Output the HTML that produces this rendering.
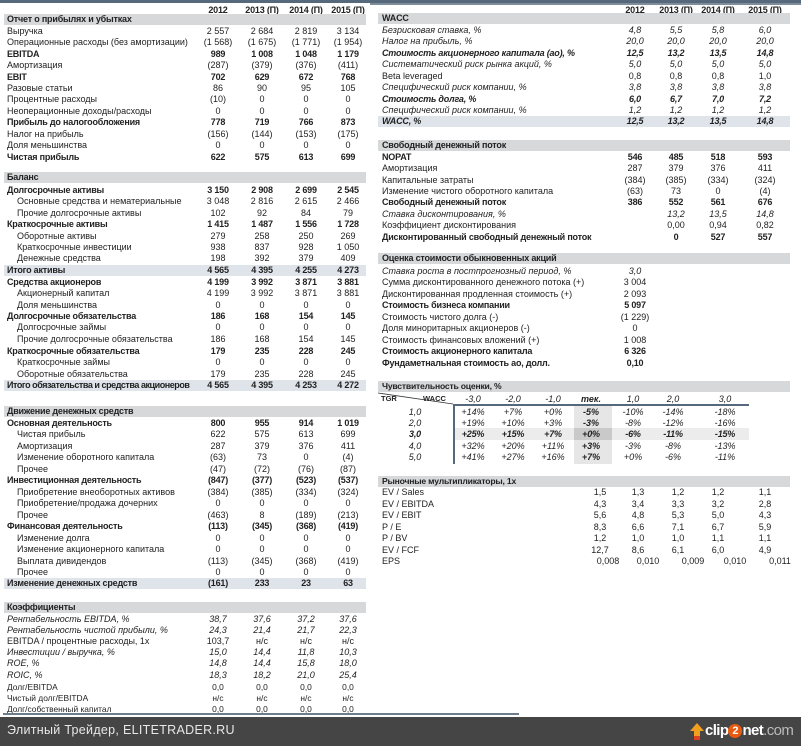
<!DOCTYPE html>
<html><head><meta charset="utf-8"><style>
body{margin:0;width:801px;height:746px;background:#fff;position:relative;overflow:hidden;font-family:"Liberation Sans","DejaVu Sans",sans-serif;color:#222}
.r{position:absolute;left:0;width:801px;height:12px;line-height:12px;font-size:9px;white-space:nowrap}
.r span{position:absolute;top:0}
.l{left:7px}.i{left:17px}.L{left:382px}
.a{left:198px;width:40px;text-align:center}.b{left:242px;width:40px;text-align:center}.c{left:286px;width:40px;text-align:center}.d{left:328px;width:40px;text-align:center}
.p{left:615px;width:40px;text-align:center}.q{left:656px;width:40px;text-align:center}.s{left:698px;width:40px;text-align:center}.t{left:745px;width:40px;text-align:center}
.B{font-weight:bold;letter-spacing:-0.2px}.I{font-style:italic}
.bar{position:absolute;height:11px;background:#d6d8d9}
.sh{position:absolute;height:11px;background:#dfe3ea}
.ln{position:absolute;background:#56697c}
</style></head><body>
<div class="ln" style="left:0;top:0;width:801px;height:3px"></div>
<div class="ln" style="left:370px;top:3px;width:431px;height:2px;background:#7d8d9c"></div>

<!-- left headers -->
<div class="r B" style="top:4px;text-decoration:underline"><span class="a">2012</span><span class="b">2013 (П)</span><span class="c">2014 (П)</span><span class="d">2015 (П)</span></div>
<div class="bar" style="left:4px;top:14px;width:362px"></div>
<div class="r B" style="top:13px"><span class="l">Отчет о прибылях и убытках</span></div>
<div class="r" style="top:25px"><span class="l">Выручка</span><span class="a">2 557</span><span class="b">2 684</span><span class="c">2 819</span><span class="d">3 134</span></div>
<div class="r" style="top:36px"><span class="l">Операционные расходы (без амортизации)</span><span class="a">(1 568)</span><span class="b">(1 675)</span><span class="c">(1 771)</span><span class="d">(1 954)</span></div>
<div class="r B" style="top:48px"><span class="l">EBITDA</span><span class="a">989</span><span class="b">1 008</span><span class="c">1 048</span><span class="d">1 179</span></div>
<div class="r" style="top:59px"><span class="l">Амортизация</span><span class="a">(287)</span><span class="b">(379)</span><span class="c">(376)</span><span class="d">(411)</span></div>
<div class="r B" style="top:71px"><span class="l">EBIT</span><span class="a">702</span><span class="b">629</span><span class="c">672</span><span class="d">768</span></div>
<div class="r" style="top:82px"><span class="l">Разовые статьи</span><span class="a">86</span><span class="b">90</span><span class="c">95</span><span class="d">105</span></div>
<div class="r" style="top:93px"><span class="l">Процентные расходы</span><span class="a">(10)</span><span class="b">0</span><span class="c">0</span><span class="d">0</span></div>
<div class="r" style="top:105px"><span class="l">Неоперационные доходы/расходы</span><span class="a">0</span><span class="b">0</span><span class="c">0</span><span class="d">0</span></div>
<div class="r B" style="top:116px"><span class="l">Прибыль до налогообложения</span><span class="a">778</span><span class="b">719</span><span class="c">766</span><span class="d">873</span></div>
<div class="r" style="top:128px"><span class="l">Налог на прибыль</span><span class="a">(156)</span><span class="b">(144)</span><span class="c">(153)</span><span class="d">(175)</span></div>
<div class="r" style="top:139px"><span class="l">Доля меньшинства</span><span class="a">0</span><span class="b">0</span><span class="c">0</span><span class="d">0</span></div>
<div class="r B" style="top:151px"><span class="l">Чистая прибыль</span><span class="a">622</span><span class="b">575</span><span class="c">613</span><span class="d">699</span></div>

<div class="bar" style="left:4px;top:172px;width:362px"></div>
<div class="r B" style="top:171px"><span class="l">Баланс</span></div>
<div class="r B" style="top:184px"><span class="l">Долгосрочные активы</span><span class="a">3 150</span><span class="b">2 908</span><span class="c">2 699</span><span class="d">2 545</span></div>
<div class="r" style="top:195px"><span class="i">Основные средства и нематериальные</span><span class="a">3 048</span><span class="b">2 816</span><span class="c">2 615</span><span class="d">2 466</span></div>
<div class="r" style="top:207px"><span class="i">Прочие долгосрочные активы</span><span class="a">102</span><span class="b">92</span><span class="c">84</span><span class="d">79</span></div>
<div class="r B" style="top:218px"><span class="l">Краткосрочные активы</span><span class="a">1 415</span><span class="b">1 487</span><span class="c">1 556</span><span class="d">1 728</span></div>
<div class="r" style="top:230px"><span class="i">Оборотные активы</span><span class="a">279</span><span class="b">258</span><span class="c">250</span><span class="d">269</span></div>
<div class="r" style="top:241px"><span class="i">Краткосрочные инвестиции</span><span class="a">938</span><span class="b">837</span><span class="c">928</span><span class="d">1 050</span></div>
<div class="r" style="top:252px"><span class="i">Денежные средства</span><span class="a">198</span><span class="b">392</span><span class="c">379</span><span class="d">409</span></div>
<div class="sh" style="left:4px;top:265px;width:362px"></div>
<div class="r B" style="top:264px"><span class="l">Итого активы</span><span class="a">4 565</span><span class="b">4 395</span><span class="c">4 255</span><span class="d">4 273</span></div>
<div class="r B" style="top:276px"><span class="l">Средства акционеров</span><span class="a">4 199</span><span class="b">3 992</span><span class="c">3 871</span><span class="d">3 881</span></div>
<div class="r" style="top:287px"><span class="i">Акционерный капитал</span><span class="a">4 199</span><span class="b">3 992</span><span class="c">3 871</span><span class="d">3 881</span></div>
<div class="r" style="top:299px"><span class="i">Доля меньшинства</span><span class="a">0</span><span class="b">0</span><span class="c">0</span><span class="d">0</span></div>
<div class="r B" style="top:310px"><span class="l">Долгосрочные обязательства</span><span class="a">186</span><span class="b">168</span><span class="c">154</span><span class="d">145</span></div>
<div class="r" style="top:321px"><span class="i">Долгосрочные займы</span><span class="a">0</span><span class="b">0</span><span class="c">0</span><span class="d">0</span></div>
<div class="r" style="top:333px"><span class="i">Прочие долгосрочные обязательства</span><span class="a">186</span><span class="b">168</span><span class="c">154</span><span class="d">145</span></div>
<div class="r B" style="top:345px"><span class="l">Краткосрочные обязательства</span><span class="a">179</span><span class="b">235</span><span class="c">228</span><span class="d">245</span></div>
<div class="r" style="top:356px"><span class="i">Краткосрочные займы</span><span class="a">0</span><span class="b">0</span><span class="c">0</span><span class="d">0</span></div>
<div class="r" style="top:368px"><span class="i">Оборотные обязательства</span><span class="a">179</span><span class="b">235</span><span class="c">228</span><span class="d">245</span></div>
<div class="sh" style="left:4px;top:380px;width:362px"></div>
<div class="r B" style="top:379px"><span class="l" style="letter-spacing:-0.45px">Итого обязательства и средства акционеров</span><span class="a">4 565</span><span class="b">4 395</span><span class="c">4 253</span><span class="d">4 272</span></div>

<div class="bar" style="left:4px;top:406px;width:362px"></div>
<div class="r B" style="top:405px"><span class="l">Движение денежных средств</span></div>
<div class="r B" style="top:417px"><span class="l">Основная деятельность</span><span class="a">800</span><span class="b">955</span><span class="c">914</span><span class="d">1 019</span></div>
<div class="r" style="top:428px"><span class="i">Чистая прибыль</span><span class="a">622</span><span class="b">575</span><span class="c">613</span><span class="d">699</span></div>
<div class="r" style="top:440px"><span class="i">Амортизация</span><span class="a">287</span><span class="b">379</span><span class="c">376</span><span class="d">411</span></div>
<div class="r" style="top:451px"><span class="i">Изменение оборотного капитала</span><span class="a">(63)</span><span class="b">73</span><span class="c">0</span><span class="d">(4)</span></div>
<div class="r" style="top:463px"><span class="i">Прочее</span><span class="a">(47)</span><span class="b">(72)</span><span class="c">(76)</span><span class="d">(87)</span></div>
<div class="r B" style="top:474px"><span class="l">Инвестиционная деятельность</span><span class="a">(847)</span><span class="b">(377)</span><span class="c">(523)</span><span class="d">(537)</span></div>
<div class="r" style="top:486px"><span class="i">Приобретение внеоборотных активов</span><span class="a">(384)</span><span class="b">(385)</span><span class="c">(334)</span><span class="d">(324)</span></div>
<div class="r" style="top:497px"><span class="i">Приобретение/продажа дочерних</span><span class="a">0</span><span class="b">0</span><span class="c">0</span><span class="d">0</span></div>
<div class="r" style="top:509px"><span class="i">Прочее</span><span class="a">(463)</span><span class="b">8</span><span class="c">(189)</span><span class="d">(213)</span></div>
<div class="r B" style="top:520px"><span class="l">Финансовая деятельность</span><span class="a">(113)</span><span class="b">(345)</span><span class="c">(368)</span><span class="d">(419)</span></div>
<div class="r" style="top:532px"><span class="i">Изменение долга</span><span class="a">0</span><span class="b">0</span><span class="c">0</span><span class="d">0</span></div>
<div class="r" style="top:543px"><span class="i">Изменение акционерного капитала</span><span class="a">0</span><span class="b">0</span><span class="c">0</span><span class="d">0</span></div>
<div class="r" style="top:555px"><span class="i">Выплата дивидендов</span><span class="a">(113)</span><span class="b">(345)</span><span class="c">(368)</span><span class="d">(419)</span></div>
<div class="r" style="top:566px"><span class="i">Прочее</span><span class="a">0</span><span class="b">0</span><span class="c">0</span><span class="d">0</span></div>
<div class="sh" style="left:4px;top:578px;width:362px"></div>
<div class="r B" style="top:577px"><span class="l">Изменение денежных средств</span><span class="a">(161)</span><span class="b">233</span><span class="c">23</span><span class="d">63</span></div>

<div class="bar" style="left:4px;top:602px;width:362px"></div>
<div class="r B" style="top:601px"><span class="l">Коэффициенты</span></div>
<div class="r I" style="top:613px"><span class="l">Рентабельность EBITDA, %</span><span class="a">38,7</span><span class="b">37,6</span><span class="c">37,2</span><span class="d">37,6</span></div>
<div class="r I" style="top:624px"><span class="l">Рентабельность чистой прибыли, %</span><span class="a">24,3</span><span class="b">21,4</span><span class="c">21,7</span><span class="d">22,3</span></div>
<div class="r" style="top:635px"><span class="l">EBITDA / процентные расходы, 1x</span><span class="a">103,7</span><span class="b">н/с</span><span class="c">н/с</span><span class="d">н/с</span></div>
<div class="r I" style="top:646px"><span class="l">Инвестиции / выручка, %</span><span class="a">15,0</span><span class="b">14,4</span><span class="c">11,8</span><span class="d">10,3</span></div>
<div class="r I" style="top:657px"><span class="l">ROE, %</span><span class="a">14,8</span><span class="b">14,4</span><span class="c">15,8</span><span class="d">18,0</span></div>
<div class="r I" style="top:669px"><span class="l">ROIC, %</span><span class="a">18,3</span><span class="b">18,2</span><span class="c">21,0</span><span class="d">25,4</span></div>
<div class="r" style="top:681px;font-size:8.4px"><span class="l">Долг/EBITDA</span><span class="a">0,0</span><span class="b">0,0</span><span class="c">0,0</span><span class="d">0,0</span></div>
<div class="r" style="top:692px;font-size:8.4px"><span class="l">Чистый долг/EBITDA</span><span class="a">н/с</span><span class="b">н/с</span><span class="c">н/с</span><span class="d">н/с</span></div>
<div class="r" style="top:703px;font-size:8.4px"><span class="l">Долг/собственный капитал</span><span class="a">0,0</span><span class="b">0,0</span><span class="c">0,0</span><span class="d">0,0</span></div>
<div class="ln" style="left:3px;top:713px;width:516px;height:2px;background:#6d7d8c"></div>

<!-- right column -->
<div class="r B" style="top:4px;text-decoration:underline"><span class="p">2012</span><span class="q">2013 (П)</span><span class="s">2014 (П)</span><span class="t">2015 (П)</span></div>
<div class="bar" style="left:378px;top:13px;width:412px"></div>
<div class="r B" style="top:12px"><span class="L">WACC</span></div>
<div class="r I" style="top:24px"><span class="L">Безрисковая ставка, %</span><span class="p">4,8</span><span class="q">5,5</span><span class="s">5,8</span><span class="t">6,0</span></div>
<div class="r I" style="top:35px"><span class="L">Налог на прибыль, %</span><span class="p">20,0</span><span class="q">20,0</span><span class="s">20,0</span><span class="t">20,0</span></div>
<div class="r I B" style="top:47px"><span class="L">Стоимость акционерного капитала (ао), %</span><span class="p">12,5</span><span class="q">13,2</span><span class="s">13,5</span><span class="t">14,8</span></div>
<div class="r I" style="top:58px"><span class="L">Систематический риск рынка акций, %</span><span class="p">5,0</span><span class="q">5,0</span><span class="s">5,0</span><span class="t">5,0</span></div>
<div class="r" style="top:70px"><span class="L">Beta leveraged</span><span class="p">0,8</span><span class="q">0,8</span><span class="s">0,8</span><span class="t">1,0</span></div>
<div class="r I" style="top:81px"><span class="L">Специфический риск компании, %</span><span class="p">3,8</span><span class="q">3,8</span><span class="s">3,8</span><span class="t">3,8</span></div>
<div class="r I B" style="top:93px"><span class="L">Стоимость долга, %</span><span class="p">6,0</span><span class="q">6,7</span><span class="s">7,0</span><span class="t">7,2</span></div>
<div class="r I" style="top:104px"><span class="L">Специфический риск компании, %</span><span class="p">1,2</span><span class="q">1,2</span><span class="s">1,2</span><span class="t">1,2</span></div>
<div class="sh" style="left:378px;top:116px;width:412px"></div>
<div class="r I B" style="top:115px"><span class="L">WACC, %</span><span class="p">12,5</span><span class="q">13,2</span><span class="s">13,5</span><span class="t">14,8</span></div>

<div class="bar" style="left:378px;top:140px;width:412px"></div>
<div class="r B" style="top:139px"><span class="L">Свободный денежный поток</span></div>
<div class="r B" style="top:151px"><span class="L">NOPAT</span><span class="p">546</span><span class="q">485</span><span class="s">518</span><span class="t">593</span></div>
<div class="r" style="top:162px"><span class="L">Амортизация</span><span class="p">287</span><span class="q">379</span><span class="s">376</span><span class="t">411</span></div>
<div class="r" style="top:174px"><span class="L">Капитальные затраты</span><span class="p">(384)</span><span class="q">(385)</span><span class="s">(334)</span><span class="t">(324)</span></div>
<div class="r" style="top:185px"><span class="L">Изменение чистого оборотного капитала</span><span class="p">(63)</span><span class="q">73</span><span class="s">0</span><span class="t">(4)</span></div>
<div class="r B" style="top:196px"><span class="L">Свободный денежный поток</span><span class="p">386</span><span class="q">552</span><span class="s">561</span><span class="t">676</span></div>
<div class="r I" style="top:208px"><span class="L">Ставка дисконтирования, %</span><span class="q">13,2</span><span class="s">13,5</span><span class="t">14,8</span></div>
<div class="r" style="top:219px"><span class="L">Коэффициент дисконтирования</span><span class="q">0,00</span><span class="s">0,94</span><span class="t">0,82</span></div>
<div class="r B" style="top:231px"><span class="L">Дисконтированный свободный денежный поток</span><span class="q">0</span><span class="s">527</span><span class="t">557</span></div>

<div class="bar" style="left:378px;top:253px;width:412px"></div>
<div class="r B" style="top:252px"><span class="L">Оценка стоимости обыкновенных акций</span></div>
<div class="r I" style="top:265px"><span class="L">Ставка роста в постпрогнозный период, %</span><span class="p">3,0</span></div>
<div class="r" style="top:276px"><span class="L">Сумма дисконтированного денежного потока (+)</span><span class="p">3 004</span></div>
<div class="r" style="top:288px"><span class="L">Дисконтированная продленная стоимость (+)</span><span class="p">2 093</span></div>
<div class="r B" style="top:299px"><span class="L">Стоимость бизнеса компании</span><span class="p">5 097</span></div>
<div class="r" style="top:311px"><span class="L">Стоимость чистого долга (-)</span><span class="p">(1 229)</span></div>
<div class="r" style="top:322px"><span class="L">Доля миноритарных акционеров (-)</span><span class="p">0</span></div>
<div class="r" style="top:334px"><span class="L">Стоимость финансовых вложений (+)</span><span class="p">1 008</span></div>
<div class="r B" style="top:345px"><span class="L">Стоимость акционерного капитала</span><span class="p">6 326</span></div>
<div class="r B" style="top:357px"><span class="L">Фундаметнальная стоимость ао, долл.</span><span class="p">0,10</span></div>

<div class="bar" style="left:378px;top:381px;width:412px"></div>
<div class="r B" style="top:380px;font-size:8.6px"><span class="L">Чувствительность оценки, %</span></div>
<div style="position:absolute;left:574px;top:404px;width:38px;height:60px;background:#e6e6e6"></div>
<div style="position:absolute;left:454px;top:428px;width:295px;height:12px;background:#ececec"></div>
<div style="position:absolute;left:574px;top:428px;width:38px;height:12px;background:#c9c9c9"></div>
<svg style="position:absolute;left:378px;top:392px" width="80" height="14"><line x1="0" y1="1" x2="75" y2="12" stroke="#333" stroke-width="0.8"/></svg>
<div class="ln" style="left:453px;top:404px;width:2px;height:60px"></div>
<div class="ln" style="left:453px;top:404px;width:296px;height:2px"></div>
<div class="r I" style="top:393px;font-size:9px"><span style="left:381px;font-style:normal;font-weight:bold;font-size:7.5px">TGR</span><span style="left:423px;font-style:normal;font-size:7.5px;font-weight:bold">WACC</span>
<span style="left:455px;width:36px;text-align:center">-3,0</span><span style="left:495px;width:36px;text-align:center">-2,0</span><span style="left:535px;width:36px;text-align:center">-1,0</span><span style="left:573px;width:36px;text-align:center;font-weight:bold">тек.</span><span style="left:615px;width:36px;text-align:center">1,0</span><span style="left:655px;width:36px;text-align:center">2,0</span><span style="left:707px;width:36px;text-align:center">3,0</span></div>
<div class="r I" style="top:406px;font-size:9px"><span style="left:400px;width:30px;text-align:center">1,0</span><span style="left:455px;width:36px;text-align:center">+14%</span><span style="left:495px;width:36px;text-align:center">+7%</span><span style="left:535px;width:36px;text-align:center">+0%</span><span style="left:573px;width:36px;text-align:center;font-weight:bold">-5%</span><span style="left:615px;width:36px;text-align:center">-10%</span><span style="left:655px;width:36px;text-align:center">-14%</span><span style="left:707px;width:36px;text-align:center">-18%</span></div>
<div class="r I" style="top:417px;font-size:9px"><span style="left:400px;width:30px;text-align:center">2,0</span><span style="left:455px;width:36px;text-align:center">+19%</span><span style="left:495px;width:36px;text-align:center">+10%</span><span style="left:535px;width:36px;text-align:center">+3%</span><span style="left:573px;width:36px;text-align:center;font-weight:bold">-3%</span><span style="left:615px;width:36px;text-align:center">-8%</span><span style="left:655px;width:36px;text-align:center">-12%</span><span style="left:707px;width:36px;text-align:center">-16%</span></div>
<div class="r I B" style="top:428px;font-size:9px"><span style="left:400px;width:30px;text-align:center">3,0</span><span style="left:455px;width:36px;text-align:center">+25%</span><span style="left:495px;width:36px;text-align:center">+15%</span><span style="left:535px;width:36px;text-align:center">+7%</span><span style="left:573px;width:36px;text-align:center">+0%</span><span style="left:615px;width:36px;text-align:center">-6%</span><span style="left:655px;width:36px;text-align:center">-11%</span><span style="left:707px;width:36px;text-align:center">-15%</span></div>
<div class="r I" style="top:440px;font-size:9px"><span style="left:400px;width:30px;text-align:center">4,0</span><span style="left:455px;width:36px;text-align:center">+32%</span><span style="left:495px;width:36px;text-align:center">+20%</span><span style="left:535px;width:36px;text-align:center">+11%</span><span style="left:573px;width:36px;text-align:center;font-weight:bold">+3%</span><span style="left:615px;width:36px;text-align:center">-3%</span><span style="left:655px;width:36px;text-align:center">-8%</span><span style="left:707px;width:36px;text-align:center">-13%</span></div>
<div class="r I" style="top:451px;font-size:9px"><span style="left:400px;width:30px;text-align:center">5,0</span><span style="left:455px;width:36px;text-align:center">+41%</span><span style="left:495px;width:36px;text-align:center">+27%</span><span style="left:535px;width:36px;text-align:center">+16%</span><span style="left:573px;width:36px;text-align:center;font-weight:bold">+7%</span><span style="left:615px;width:36px;text-align:center">+0%</span><span style="left:655px;width:36px;text-align:center">-6%</span><span style="left:707px;width:36px;text-align:center">-11%</span></div>

<div class="bar" style="left:378px;top:476px;width:412px"></div>
<div class="r B" style="top:475px;font-size:8.6px"><span class="L">Рыночные мультипликаторы, 1x</span></div>
<div class="r" style="top:486px"><span class="L">EV / Sales</span><span style="left:580px;width:40px;text-align:center">1,5</span><span style="left:618px;width:40px;text-align:center">1,3</span><span style="left:658px;width:40px;text-align:center">1,2</span><span style="left:698px;width:40px;text-align:center">1,2</span><span style="left:745px;width:40px;text-align:center">1,1</span></div>
<div class="r" style="top:498px"><span class="L">EV / EBITDA</span><span style="left:580px;width:40px;text-align:center">4,3</span><span style="left:618px;width:40px;text-align:center">3,4</span><span style="left:658px;width:40px;text-align:center">3,3</span><span style="left:698px;width:40px;text-align:center">3,2</span><span style="left:745px;width:40px;text-align:center">2,8</span></div>
<div class="r" style="top:509px"><span class="L">EV / EBIT</span><span style="left:580px;width:40px;text-align:center">5,6</span><span style="left:618px;width:40px;text-align:center">4,8</span><span style="left:658px;width:40px;text-align:center">5,3</span><span style="left:698px;width:40px;text-align:center">5,0</span><span style="left:745px;width:40px;text-align:center">4,3</span></div>
<div class="r" style="top:521px"><span class="L">P / E</span><span style="left:580px;width:40px;text-align:center">8,3</span><span style="left:618px;width:40px;text-align:center">6,6</span><span style="left:658px;width:40px;text-align:center">7,1</span><span style="left:698px;width:40px;text-align:center">6,7</span><span style="left:745px;width:40px;text-align:center">5,9</span></div>
<div class="r" style="top:532px"><span class="L">P / BV</span><span style="left:580px;width:40px;text-align:center">1,2</span><span style="left:618px;width:40px;text-align:center">1,0</span><span style="left:658px;width:40px;text-align:center">1,0</span><span style="left:698px;width:40px;text-align:center">1,1</span><span style="left:745px;width:40px;text-align:center">1,1</span></div>
<div class="r" style="top:544px"><span class="L">EV / FCF</span><span style="left:580px;width:40px;text-align:center">12,7</span><span style="left:618px;width:40px;text-align:center">8,6</span><span style="left:658px;width:40px;text-align:center">6,1</span><span style="left:698px;width:40px;text-align:center">6,0</span><span style="left:745px;width:40px;text-align:center">4,9</span></div>
<div class="r" style="top:555px"><span class="L">EPS</span><span style="left:588px;width:40px;text-align:center">0,008</span><span style="left:628px;width:40px;text-align:center">0,010</span><span style="left:673px;width:40px;text-align:center">0,009</span><span style="left:715px;width:40px;text-align:center">0,010</span><span style="left:760px;width:40px;text-align:center">0,011</span></div>

<!-- footer -->
<div style="position:absolute;left:0;top:717px;width:801px;height:29px;background:#454545"></div>
<div style="position:absolute;left:7px;top:723px;font-size:12.5px;color:#e8e8e8;letter-spacing:0.3px;white-space:nowrap">Элитный Трейдер, ELITETRADER.RU</div>
<div style="position:absolute;left:690px;top:721px;width:111px;height:22px;white-space:nowrap">
<svg style="position:absolute;left:0;top:2px" width="14" height="18"><path d="M7 0 L14 8 L10 8 L10 17 L4 17 L4 8 L0 8Z" fill="#f0a020"/><rect x="4" y="13" width="6" height="4" fill="#e04020"/></svg>
<span style="position:absolute;left:15px;top:1px;font-size:15px;font-weight:bold;color:#fff;letter-spacing:-0.6px;white-space:nowrap">clip<span style="display:inline-block;width:14px;height:14px;border-radius:50%;background:#e85a10;color:#fff;text-align:center;line-height:14px;font-size:11px;vertical-align:1px;letter-spacing:0">2</span>net<span style="font-weight:normal;color:#bbb">.com</span></span>
</div>
</body></html>
